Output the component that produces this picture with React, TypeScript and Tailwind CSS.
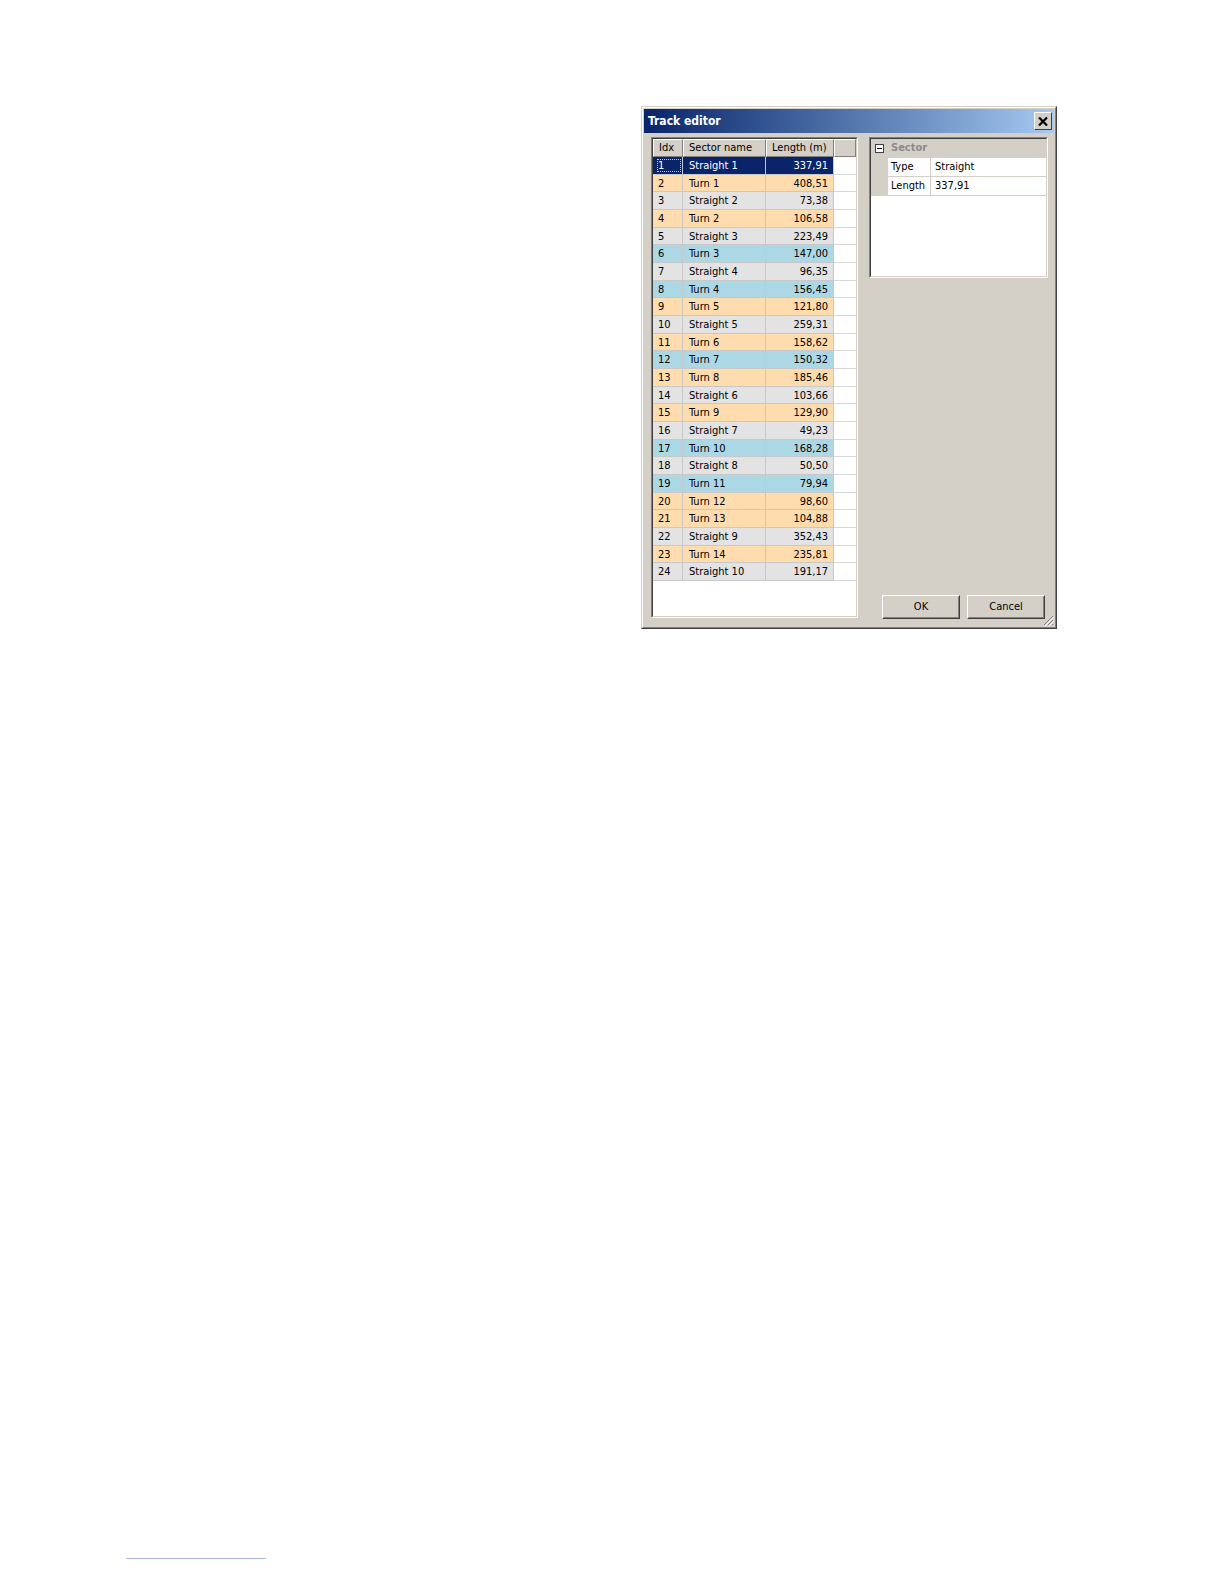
import React from 'react';

type Kind = 'straight' | 'turnA' | 'turnB';

interface Sector {
  idx: number;
  name: string;
  length: string;
  kind: Kind;
}

const sectors: Sector[] = [
  { idx: 1, name: 'Straight 1', length: '337,91', kind: 'straight' },
  { idx: 2, name: 'Turn 1', length: '408,51', kind: 'turnA' },
  { idx: 3, name: 'Straight 2', length: '73,38', kind: 'straight' },
  { idx: 4, name: 'Turn 2', length: '106,58', kind: 'turnA' },
  { idx: 5, name: 'Straight 3', length: '223,49', kind: 'straight' },
  { idx: 6, name: 'Turn 3', length: '147,00', kind: 'turnB' },
  { idx: 7, name: 'Straight 4', length: '96,35', kind: 'straight' },
  { idx: 8, name: 'Turn 4', length: '156,45', kind: 'turnB' },
  { idx: 9, name: 'Turn 5', length: '121,80', kind: 'turnA' },
  { idx: 10, name: 'Straight 5', length: '259,31', kind: 'straight' },
  { idx: 11, name: 'Turn 6', length: '158,62', kind: 'turnA' },
  { idx: 12, name: 'Turn 7', length: '150,32', kind: 'turnB' },
  { idx: 13, name: 'Turn 8', length: '185,46', kind: 'turnA' },
  { idx: 14, name: 'Straight 6', length: '103,66', kind: 'straight' },
  { idx: 15, name: 'Turn 9', length: '129,90', kind: 'turnA' },
  { idx: 16, name: 'Straight 7', length: '49,23', kind: 'straight' },
  { idx: 17, name: 'Turn 10', length: '168,28', kind: 'turnB' },
  { idx: 18, name: 'Straight 8', length: '50,50', kind: 'straight' },
  { idx: 19, name: 'Turn 11', length: '79,94', kind: 'turnB' },
  { idx: 20, name: 'Turn 12', length: '98,60', kind: 'turnA' },
  { idx: 21, name: 'Turn 13', length: '104,88', kind: 'turnA' },
  { idx: 22, name: 'Straight 9', length: '352,43', kind: 'straight' },
  { idx: 23, name: 'Turn 14', length: '235,81', kind: 'turnA' },
  { idx: 24, name: 'Straight 10', length: '191,17', kind: 'straight' },
];

const rowBg: Record<Kind, string> = {
  straight: 'bg-[#e3e3e3]',
  turnA: 'bg-[#ffdcae]',
  turnB: 'bg-[#acd8e6]',
};

const font = { fontFamily: '"DejaVu Sans Condensed", "Liberation Sans", sans-serif' };

function HeaderCell({ children, w, last = false }: { children?: React.ReactNode; w: string; last?: boolean }) {
  return (
    <div
      className={`${w} h-full shrink-0 bg-[#d4d0c8] border-t border-l border-t-white border-l-white border-r border-b border-r-[#808080] border-b-[#808080] px-[5px] flex items-center whitespace-nowrap overflow-hidden ${
        last ? 'flex-1' : ''
      }`}
    >
      {children}
    </div>
  );
}

function SectorGrid() {
  return (
    <div className="w-[207px] h-[481px] border border-t-[#808080] border-l-[#808080] border-r-white border-b-white">
      <div className="w-full h-full border border-t-[#404040] border-l-[#404040] border-r-[#d4d0c8] border-b-[#d4d0c8] bg-white overflow-hidden">
        <div className="flex h-[18px] text-black">
          <HeaderCell w="w-[30px]">Idx</HeaderCell>
          <HeaderCell w="w-[83px]">Sector name</HeaderCell>
          <HeaderCell w="w-[68px]">Length (m)</HeaderCell>
          <HeaderCell w="w-[22px]" last />
        </div>
        {sectors.map((s) => {
          const selected = s.idx === 1;
          const bg = selected ? 'bg-[#0a246a] text-white' : `${rowBg[s.kind]} text-black`;
          return (
            <div key={s.idx} className="flex h-[17.68px] leading-none whitespace-nowrap">
              <div className={`w-[30px] shrink-0 ${bg} border-b border-r border-[#c8c8c8] pl-[5px] flex items-center`}>
                <span className={selected ? 'outline outline-1 outline-dotted outline-[#c0c8e0] pr-[16px]' : ''}>{s.idx}</span>
              </div>
              <div className={`w-[83px] shrink-0 ${bg} border-b border-r border-[#c8c8c8] pl-[6px] flex items-center`}>
                {s.name}
              </div>
              <div className={`w-[68px] shrink-0 ${bg} border-b border-r border-[#c8c8c8] pr-[5px] flex items-center justify-end`}>
                {s.length}
              </div>
              <div className="flex-1 bg-white border-b border-[#d8d8d8]" />
            </div>
          );
        })}
      </div>
    </div>
  );
}

function PropertyGrid() {
  return (
    <div className="w-[179px] h-[141px] border border-t-[#808080] border-l-[#808080] border-r-white border-b-white">
      <div className="w-full h-full border border-t-[#404040] border-l-[#404040] border-r-[#d4d0c8] border-b-[#d4d0c8] bg-white overflow-hidden">
        <div className="flex h-[19px] items-center bg-[#d4d0c8]">
          <div className="w-[17px] flex items-center justify-center">
            <svg width="9" height="9" viewBox="0 0 9 9">
              <rect x="0.5" y="0.5" width="8" height="8" fill="white" stroke="#404040" />
              <line x1="2" y1="4.5" x2="7" y2="4.5" stroke="#000" />
            </svg>
          </div>
          <span className="pl-[3px] font-bold text-[#8c8c8c]">Sector</span>
        </div>
        {[
          ['Type', 'Straight'],
          ['Length', '337,91'],
        ].map(([k, v]) => (
          <div key={k} className="flex h-[19px] whitespace-nowrap">
            <div className="w-[17px] shrink-0 bg-[#d4d0c8]" />
            <div className="w-[43px] shrink-0 border-b border-r border-[#d4d0c8] pl-[3px] flex items-center">{k}</div>
            <div className="flex-1 border-b border-[#d4d0c8] pl-[4px] flex items-center">{v}</div>
          </div>
        ))}
      </div>
    </div>
  );
}

function Button({ children }: { children: React.ReactNode }) {
  return (
    <div className="w-[78px] h-[24px] border border-t-white border-l-white border-r-[#404040] border-b-[#404040]">
      <div className="w-full h-full border border-t-[#d4d0c8] border-l-[#d4d0c8] border-r-[#808080] border-b-[#808080] flex items-center justify-center bg-[#d4d0c8]">
        {children}
      </div>
    </div>
  );
}

export default function App() {
  return (
    <div className="relative w-[1224px] h-[1584px] bg-white" style={font}>
      <div className="pt-[106px] pl-[641px]">
        <div className="relative w-[416px] h-[523px] border border-t-[#d4d0c8] border-l-[#d4d0c8] border-r-[#404040] border-b-[#404040]">
          <div className="w-full h-full border border-t-white border-l-white border-r-[#808080] border-b-[#808080] bg-[#d4d0c8] p-[1px] flex flex-col text-[11px]">
            {/* title bar */}
            <div className="h-[24px] shrink-0 flex items-center justify-between bg-gradient-to-r from-[#0a246a] to-[#a6caf0] pl-[4px] pr-[2px]">
              <span className="text-white font-bold text-[12px]">Track editor</span>
              <div className="w-[18px] h-[18px] border border-t-white border-l-white border-r-[#404040] border-b-[#404040] bg-[#d4d0c8] flex items-center justify-center">
                <svg width="10" height="9" viewBox="0 0 10 9">
                  <path d="M1 0.5 L9 8.5 M9 0.5 L1 8.5" stroke="#000" strokeWidth="2.2" />
                </svg>
              </div>
            </div>
            {/* body */}
            <div className="flex-1 flex pt-[4px] pl-[7px] pr-[4px] pb-[7px]">
              <SectorGrid />
              <div className="flex-1 flex flex-col ml-[11px]">
                <PropertyGrid />
                <div className="flex-1" />
                <div className="flex gap-[7px] pl-[13px]">
                  <Button>OK</Button>
                  <Button>Cancel</Button>
                </div>
              </div>
            </div>
          </div>
          {/* resize grip */}
          <svg className="absolute right-[2px] bottom-[2px]" width="12" height="12" viewBox="0 0 12 12">
            <path d="M11 2 L2 11 M11 6 L6 11 M11 10 L10 11" stroke="#808080" strokeWidth="1" />
            <path d="M12 3 L3 12 M12 7 L7 12" stroke="#ffffff" strokeWidth="1" />
          </svg>
        </div>
      </div>
      <div className="absolute left-[126px] top-[1558px] w-[140px] h-px bg-[#aab6e0]" />
    </div>
  );
}
